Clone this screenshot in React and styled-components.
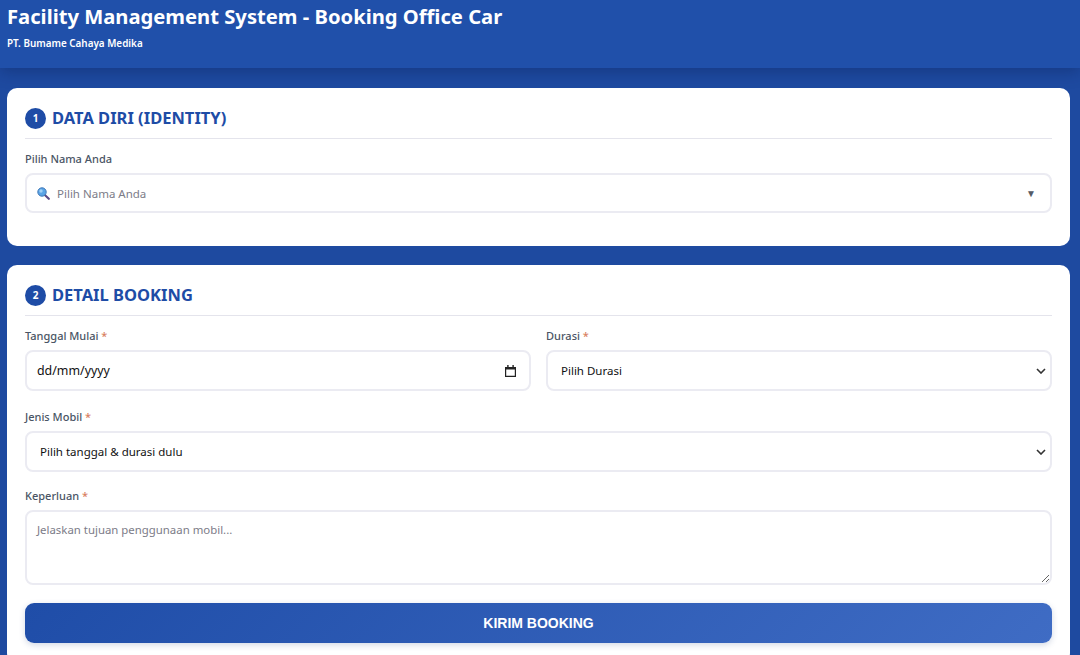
import React from 'react'
import styled, { createGlobalStyle } from 'styled-components'

const FONT = `"Noto Sans", "Open Sans", sans-serif`;
const CHEVRON = `url("data:image/svg+xml,%3Csvg xmlns='http://www.w3.org/2000/svg' width='10' height='6' viewBox='0 0 10 6'%3E%3Cpath d='M1 1l4 4 4-4' fill='none' stroke='%23333' stroke-width='1.6'/%3E%3C/svg%3E")`;

export default function App() {
    return (
        <React.Fragment>
            <GlobalStyle />
            <Header>
                <HeaderTitle>Facility Management System - Booking Office Car</HeaderTitle>
                <HeaderSub>PT. Bumame Cahaya Medika</HeaderSub>
            </Header>
            <Main>
                <Card $height={158}>
                    <SectionTitle number="1" title="DATA DIRI (IDENTITY)" />
                    <Field>
                        <Label>Pilih Nama Anda</Label>
                        <SearchBox>
                            <SearchIcon />
                            <SearchText>Pilih Nama Anda</SearchText>
                            <SearchCaret>▼</SearchCaret>
                        </SearchBox>
                    </Field>
                </Card>
                <Card>
                    <SectionTitle number="2" title="DETAIL BOOKING" />
                    <Row>
                        <Field>
                            <Label>Tanggal Mulai <Required>*</Required></Label>
                            <DateBox>
                                <span>dd/mm/yyyy</span>
                                <CalendarIcon />
                            </DateBox>
                        </Field>
                        <Field>
                            <Label>Durasi <Required>*</Required></Label>
                            <Select defaultValue="">
                                <option value="">Pilih Durasi</option>
                            </Select>
                        </Field>
                    </Row>
                    <Field>
                        <Label>Jenis Mobil <Required>*</Required></Label>
                        <Select defaultValue="">
                            <option value="">Pilih tanggal &amp; durasi dulu</option>
                        </Select>
                    </Field>
                    <Field>
                        <Label>Keperluan <Required>*</Required></Label>
                        <TextArea placeholder="Jelaskan tujuan penggunaan mobil..." />
                    </Field>
                    <SubmitButton type="button">KIRIM BOOKING</SubmitButton>
                </Card>
            </Main>
        </React.Fragment>
    )
}

const SectionTitle = ({ number, title }) => {
    return (
        <SectionHead>
            <SectionNumber>{ number }</SectionNumber>
            <SectionText>{ title }</SectionText>
        </SectionHead>
    )
}

const SearchIcon = () => {
    return (
        <svg width="13" height="13" viewBox="0 0 13 13">
            <path d="M7.6 7.8 L11.8 11.8" stroke="#5b4a86" strokeWidth="2.2" strokeLinecap="round" />
            <circle cx="5" cy="5" r="4.2" fill="#5aa4e6" stroke="#3f78b8" strokeWidth="1" />
            <circle cx="4" cy="4" r="1.7" fill="#9fd0f5" />
        </svg>
    )
}

const CalendarIcon = () => {
    return (
        <svg width="11" height="12" viewBox="0 0 11 12">
            <path d="M0 2h11v10H0z M1.2 4.6v6.2h8.6V4.6z" fill="#222222" fillRule="evenodd" />
            <path d="M2.2 0h1.4v2H2.2z M7.4 0h1.4v2H7.4z" fill="#222222" />
        </svg>
    )
}

// styled components
const GlobalStyle = createGlobalStyle`
    * {
        box-sizing: border-box;
    }
    html, body {
        margin: 0;
        padding: 0;
        height: 655px;
        overflow: hidden;
    }
    body {
        background: #1e4aa0;
        font-family: ${FONT};
    }
`;

const Header = styled.header`
    position: relative;
    height: 68px;
    padding: 3px 7px 0px;
    background-color: #2050aa;
    box-shadow: 0px 4px 14px rgba(10,30,80,0.35);
    color: #ffffff;
`;

const HeaderTitle = styled.h1`
    margin: 0px;
    font-size: 20.2px;
    font-weight: 700;
    line-height: 27px;
`;

const HeaderSub = styled.p`
    margin: 6px 0px 0px;
    font-size: 9.9px;
    font-weight: 600;
    line-height: 14px;
`;

const Main = styled.main`
    display: flex;
    flex-flow: column nowrap;
    gap: 19px;
    padding: 20px 10px 0px 7px;
`;

const Card = styled.section`
    display: flex;
    flex-flow: column nowrap;
    gap: 16px;
    height: ${({ $height }) => ($height ? `${$height}px` : 'auto')};
    padding: 19px 18px 20px;
    border-radius: 10px;
    background-color: #ffffff;
`;

const SectionHead = styled.div`
    display: flex;
    flex-flow: row nowrap;
    align-items: center;
    gap: 6px;
    flex: none;
    height: 32px;
    padding-bottom: 9px;
    margin-bottom: -4px;
    border-bottom: 1px solid #e4e4ec;
`;

const SectionNumber = styled.span`
    display: flex;
    justify-content: center;
    align-items: center;
    width: 21px;
    height: 21px;
    border-radius: 50%;
    background-color: #1e4ca6;
    color: #ffffff;
    font-size: 10px;
    font-weight: 700;
`;

const SectionText = styled.h2`
    margin: 0px;
    color: #1e4ca6;
    font-size: 16.5px;
    font-weight: 700;
    line-height: 22px;
`;

const Row = styled.div`
    display: grid;
    grid-template-columns: 506px 506px;
    gap: 15px;
    margin-bottom: 2px;
`;

const Field = styled.div`
    display: flex;
    flex-flow: column nowrap;
    gap: 6px;
`;

const Label = styled.label`
    color: #4a5565;
    font-size: 11px;
    font-weight: 500;
    line-height: 16px;
`;

const Required = styled.span`
    color: #d9805f;
`;

const SearchBox = styled.div`
    display: flex;
    flex-flow: row nowrap;
    align-items: center;
    height: 40px;
    padding: 0px 14px 0px 10px;
    border: 2px solid #ebebf2;
    border-radius: 8px;
    background-color: #ffffff;
`;

const SearchText = styled.span`
    flex: 1;
    margin-left: 7px;
    color: #7c7c88;
    font-size: 11.5px;
`;

const SearchCaret = styled.span`
    color: #555b66;
    font-size: 10px;
`;

const DateBox = styled.div`
    display: flex;
    flex-flow: row nowrap;
    justify-content: space-between;
    align-items: center;
    height: 41px;
    padding: 0px 13px 0px 10px;
    border: 2px solid #ebebf2;
    border-radius: 8px;
    background-color: #ffffff;
    color: #111111;
    font-size: 12.4px;
`;

const Select = styled.select`
    width: 100%;
    height: 41px;
    padding: 0px 9px 0px 13px;
    border: 2px solid #ebebf2;
    border-radius: 8px;
    background: #ffffff ${CHEVRON} no-repeat right 4px center;
    appearance: none;
    color: #111111;
    font-family: ${FONT};
    font-size: 11.5px;
`;

const TextArea = styled.textarea`
    display: block;
    width: 100%;
    height: 75px;
    padding: 10px;
    border: 2px solid #ebebf2;
    border-radius: 8px;
    background-color: #ffffff;
    font-family: ${FONT};
    font-size: 11.4px;

    &::placeholder {
        color: #7c7c88;
    }
`;

const SubmitButton = styled.button`
    flex: none;
    width: 100%;
    height: 40px;
    margin-top: 2px;
    border: none;
    border-radius: 9px;
    background: linear-gradient(135deg, #1f4da8 0%, #3f6cc4 100%);
    box-shadow: 0px 2px 6px rgba(30,60,120,0.2);
    color: #ffffff;
    font-family: "Liberation Sans", sans-serif;
    font-size: 14px;
    font-weight: 700;
`;
